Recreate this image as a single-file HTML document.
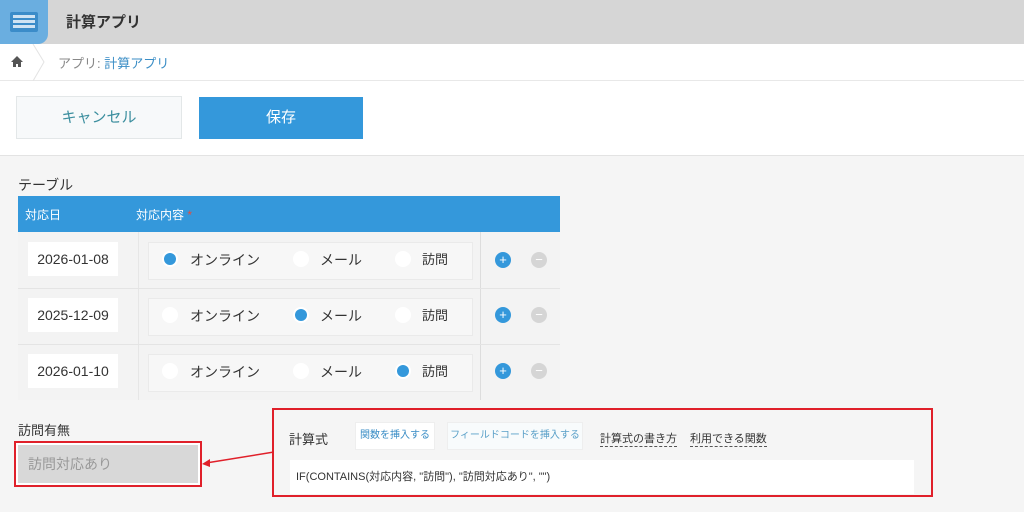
<!DOCTYPE html>
<html><head><meta charset="utf-8"><style>
*{box-sizing:border-box;margin:0;padding:0}
body{width:1024px;height:512px;overflow:hidden;background:#f5f5f5;font-family:"Liberation Sans","Noto Sans CJK JP",sans-serif;color:#333;position:relative}
.a{position:absolute}
.radio{position:absolute;width:16px;height:16px;border-radius:50%;background:#fff}
.on{background:#3498db;width:12px;height:12px;margin:2px}
.t{position:absolute;font-size:14px;color:#333;line-height:18px}
.p,.m{position:absolute;width:16px;height:16px;border-radius:50%;color:#fff;font-size:13px;line-height:16px;text-align:center}
.p{left:495px;background:#3498db}.m{left:531px;background:#d5d5d5}
</style></head><body>
<div class="a" style="left:0;top:0;width:1024px;height:44px;background:#d6d6d6"></div>
<div class="a" style="left:0;top:0;width:48px;height:44px;background:#6aaee0;border-radius:0 0 10px 0"></div>
<div class="a" style="left:10px;top:12px;width:28px;height:20px;background:#3b8cc9;border-radius:2px"></div>
<div class="a" style="left:13px;top:15px;width:22px;height:3px;background:#cfe3f3"></div>
<div class="a" style="left:13px;top:20px;width:22px;height:3px;background:#cfe3f3"></div>
<div class="a" style="left:13px;top:25px;width:22px;height:3px;background:#cfe3f3"></div>
<div class="a" style="left:66px;top:11px;font-size:15px;font-weight:bold">計算アプリ</div>
<div class="a" style="left:0;top:44px;width:1024px;height:112px;background:#fff;border-bottom:1px solid #e3e3e3"></div>
<div class="a" style="left:0;top:80px;width:1024px;height:1px;background:#e8e8e8"></div>
<svg class="a" style="left:10px;top:55px" width="14" height="13"><path d="M7 1 L13 7 L11 7 L11 12 L8 12 L8 9 L6 9 L6 12 L3 12 L3 7 L1 7Z" fill="#555"/></svg>
<svg class="a" style="left:32px;top:44px" width="14" height="37"><path d="M1 0 L12 18 L1 37" stroke="#e3e3e3" fill="none"/></svg>
<div class="a" style="left:58px;top:53px;font-size:13px;color:#888">アプリ: <span style="color:#3b8ec6">計算アプリ</span></div>
<div class="a" style="left:16px;top:96px;width:166px;height:43px;background:#f7f9fa;border:1px solid #e3e7e8;text-align:center;line-height:41px;font-size:15px;color:#3b8e9e">キャンセル</div>
<div class="a" style="left:199px;top:97px;width:164px;height:42px;background:#3498db;text-align:center;line-height:42px;font-size:15px;color:#fff">保存</div>
<div class="a" style="left:18px;top:175px;font-size:14px">テーブル</div>
<div class="a" style="left:18px;top:196px;width:542px;height:36px;background:#3498db"></div>
<div class="a" style="left:25px;top:206px;font-size:12px;color:#fff">対応日</div>
<div class="a" style="left:136px;top:206px;font-size:12px;color:#fff">対応内容 <span style="color:#e74c3c">*</span></div>
<div class="a" style="left:18px;top:232px;width:542px;height:168px;background:#f3f3f3"></div>
<div class="a" style="left:480px;top:232px;width:1px;height:168px;background:#ddd"></div>
<div class="a" style="left:138px;top:232px;width:1px;height:168px;background:#e6e6e6"></div>
<div class="a" style="left:18px;top:288px;width:542px;height:1px;background:#e4e4e4"></div>
<div class="a" style="left:18px;top:344px;width:542px;height:1px;background:#e4e4e4"></div>

<div class="a" style="left:28px;top:242px;width:90px;height:34px;background:#fff;font-size:14px;line-height:34px;text-align:center">2026-01-08</div>
<div class="a" style="left:148px;top:242px;width:325px;height:38px;background:#f7f7f7;border:1px solid #eaeaea"></div>
<div class="radio" style="left:162px;top:251px"><div class="radio on"></div></div>
<div class="t" style="left:190px;top:251px">オンライン</div>
<div class="radio" style="left:293px;top:251px"></div>
<div class="t" style="left:320px;top:251px">メール</div>
<div class="radio" style="left:395px;top:251px"></div>
<div class="t" style="left:422px;top:251px;font-size:13px">訪問</div>

<div class="a" style="left:28px;top:298px;width:90px;height:34px;background:#fff;font-size:14px;line-height:34px;text-align:center">2025-12-09</div>
<div class="a" style="left:148px;top:298px;width:325px;height:38px;background:#f7f7f7;border:1px solid #eaeaea"></div>
<div class="radio" style="left:162px;top:307px"></div>
<div class="t" style="left:190px;top:307px">オンライン</div>
<div class="radio" style="left:293px;top:307px"><div class="radio on"></div></div>
<div class="t" style="left:320px;top:307px">メール</div>
<div class="radio" style="left:395px;top:307px"></div>
<div class="t" style="left:422px;top:307px;font-size:13px">訪問</div>

<div class="a" style="left:28px;top:354px;width:90px;height:34px;background:#fff;font-size:14px;line-height:34px;text-align:center">2026-01-10</div>
<div class="a" style="left:148px;top:354px;width:325px;height:38px;background:#f7f7f7;border:1px solid #eaeaea"></div>
<div class="radio" style="left:162px;top:363px"></div>
<div class="t" style="left:190px;top:363px">オンライン</div>
<div class="radio" style="left:293px;top:363px"></div>
<div class="t" style="left:320px;top:363px">メール</div>
<div class="radio" style="left:395px;top:363px"><div class="radio on"></div></div>
<div class="t" style="left:422px;top:363px;font-size:13px">訪問</div>

<div class="p" style="top:252px">+</div><div class="m" style="top:252px">−</div>
<div class="p" style="top:307px">+</div><div class="m" style="top:307px">−</div>
<div class="p" style="top:363px">+</div><div class="m" style="top:363px">−</div>

<div class="a" style="left:18px;top:420px;font-size:13px">訪問有無</div>
<div class="a" style="left:14px;top:441px;width:188px;height:46px;border:2px solid #e0202a;background:#fff;padding:2px"><div style="width:100%;height:100%;background:#d8d8d8;font-size:14px;color:#999;padding:9px 10px">訪問対応あり</div></div>
<svg class="a" style="left:200px;top:450px" width="76" height="20"><path d="M74 2 L6 13" stroke="#e0202a" stroke-width="1.5"/><path d="M2 14 L10 9 L10 17Z" fill="#e0202a"/></svg>
<div class="a" style="left:272px;top:408px;width:661px;height:89px;border:2px solid #e0202a;background:#f5f5f5"></div>
<div class="a" style="left:289px;top:429px;font-size:13px">計算式</div>
<div class="a" style="left:355px;top:422px;width:80px;height:28px;background:#fff;border:1px solid #eee;font-size:10px;color:#3b8ec6;line-height:26px;text-align:center">関数を挿入する</div>
<div class="a" style="left:447px;top:422px;width:136px;height:28px;background:#f8fbfc;border:1px solid #eee;font-size:10px;color:#5aa0c8;line-height:26px;text-align:center">フィールドコードを挿入する</div>
<div class="a" style="left:600px;top:430px;font-size:11px;border-bottom:1px dashed #555">計算式の書き方</div>
<div class="a" style="left:690px;top:430px;font-size:11px;border-bottom:1px dashed #555">利用できる関数</div>
<div class="a" style="left:290px;top:460px;width:624px;height:34px;background:#fff;font-size:11px;padding:8px 6px">IF(CONTAINS(対応内容, "訪問"), "訪問対応あり", "")</div>
</body></html>
